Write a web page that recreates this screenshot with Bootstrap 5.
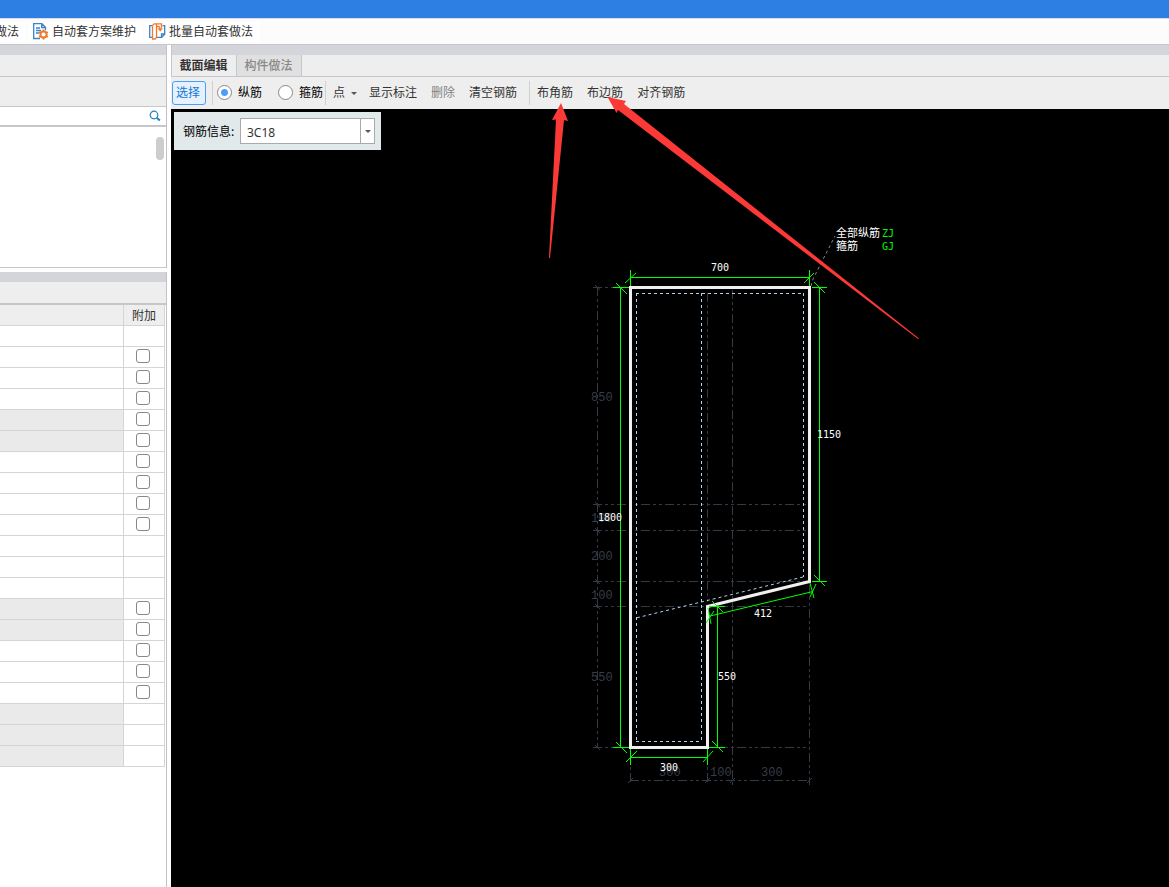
<!DOCTYPE html>
<html lang="zh-CN">
<head>
<meta charset="utf-8">
<meta name="viewport" content="width=device-width, initial-scale=1">
<title>截面编辑</title>
<link rel="stylesheet" href="https://cdn.jsdelivr.net/npm/bootstrap@5.3.0/dist/css/bootstrap.min.css">
<style>
body{font-family:"Noto Sans CJK SC",sans-serif;font-size:12px;line-height:18px;color:#333;background:#fff}
button{color:inherit}
.titlebar{height:18px;background:#2d7fe3}
.ribbon{height:27px;border-top:1px solid #d9dbe0;border-bottom:1px solid #c5c7cc;background:#fcfcfc;margin:0}
.ribbon-item{height:20px;border:0;border-radius:3px;background:#fff;padding:0 7px 0 5px;gap:3px;margin-right:1px;white-space:nowrap}
.ribbon-item span{padding-bottom:2px}
.ribbon-cut{margin-left:-10px;margin-right:2px}
.side{width:167px;margin-right:4px}
.pane{border-right:1px solid #c0c2c6}
.strip{height:10px;background:#d4d5db}
.bar-a{height:22px;background:#eee;border-bottom:1px solid #c5c7cc}
.bar-b{height:30px;background:#eee;border-bottom:1px solid #c5c7cc}
.search{height:20px;border-bottom:2px solid #c5c7cc}
.search input{min-width:0;border:0;outline:0}
.search button{border:0;background:none;width:23px}
.tree{height:141px;border-bottom:1px solid #c5c7cc;padding:10px 2px 0 0}
.thumb{width:8px;height:23px;border-radius:4px;background:#cdcdcd}
.bar-c{height:23px;background:#eee;border-bottom:2px solid #c5c7cc}
.props{width:165px;border-collapse:separate;border-spacing:0;table-layout:fixed}
.props th,.props td{height:21px;padding:0;border-right:1px solid #d5d5d5;border-bottom:1px solid #d5d5d5;font-weight:400;text-align:center;line-height:0}
.props th{background:#eee;line-height:20px}
.props .extra{width:41px}
.props .off td:first-child{background:#eaeaea}
.props input{appearance:none;width:14px;height:14px;margin:0 2px 2px 0;border:1px solid #888;border-radius:3px;background:#fff;vertical-align:middle}
.props input:checked{background:#4a9df8}
.tabs{height:22px;background:#eee;border-bottom:1px solid #c5c7cc;border-left:1px solid #c5c7cc}
.strip-main{border-left:1px solid #c5c7cc}
.tab-btn{width:65px;border:0;border-right:1px solid #c5c7cc;background:#eee;padding:0 1px 1px 0;font-weight:700}
.tab-btn.idle{background:#e0e0e0;color:#888;font-weight:500}
.tools{height:32px;background:#eee;padding-left:1px;white-space:nowrap}
.tools button{border:0;background:none;padding:0 0 2px;height:24px}
.tools .pick{width:34px;height:24px;border:1px solid #4a9df8;border-radius:3px;background:#e5f1fc;color:#1477d8;padding-right:2px}
.rule{width:1px;height:24px;background:#d0d0d0}
.rule-a{margin:0 4px 0 6px}
.rule-b{margin:0 7px 0 2px}
.rule-c{margin:0 7px 0 12px}
.tools input{appearance:none;width:15px;height:15px;margin:0;border:1px solid #888;border-radius:50%;background:#fff}
.tools input:checked{background:radial-gradient(circle,#4a9df8 3px,#fff 4px)}
.tools label{color:#000;gap:6px;padding-bottom:2px}
.gap14{gap:14px}
.drop{gap:6px;margin-right:-2px}
.caret{width:0;height:0;border:3px solid transparent;border-top-color:#555;border-bottom:0}
.drop .caret{margin-top:3px}
.stage{background:#000;min-height:640px}
.stage svg{overflow:visible;pointer-events:none}
.info{left:3px;top:3px;width:207px;height:38px;background:#e1e9eb;color:#000;padding:0 6px 0 9px}
.combo{width:135px;height:26px;border:1px solid #aaa;background:#fff}
.combo input{min-width:0;border:0;outline:0;padding:2px 6px 0;font:12px "Noto Sans",sans-serif;color:#333}
.combo button{width:14px;flex:none;border:0;border-left:1px solid #aaa;background:#fff;padding:0}
.dim{font:10px "DejaVu Sans Mono",monospace;fill:#fff}
.bar-code{fill:#0f0}
.axis-dim{font:12px "Liberation Mono",monospace;fill:#363d48}
.cjk{font:11px "Noto Sans CJK SC",sans-serif;fill:#fff}
</style>
</head>
<body class="d-flex flex-column min-vh-100 overflow-hidden">
<div class="titlebar"></div>
<header class="ribbon d-flex align-items-center">
  <button class="ribbon-item ribbon-cut d-flex align-items-center"><span>做法</span></button>
  <button class="ribbon-item d-flex align-items-center">
    <svg width="16" height="17" viewBox="0 0 16 17" fill="none" aria-hidden="true"><path d="M7 15.500H.7V.7h8.200l3.600 3.600v3M8.700.7v3.800h3.800M3 5h4M3 7.500h5M3 10h3" stroke="#3d83c9" stroke-width="1.300"/><circle cx="10.500" cy="11.500" r="3.100" stroke="#ef7a2b" stroke-width="2"/><path d="M10.500 6.500v2M10.500 14.500v2M6.200 9l1.700 1M13.100 13l1.700 1M6.200 14l1.700-1M13.100 10l1.700-1" stroke="#ef7a2b" stroke-width="2"/></svg>
    <span>自动套方案维护</span>
  </button>
  <button class="ribbon-item d-flex align-items-center">
    <svg width="17" height="17" viewBox="0 0 17 17" fill="none" aria-hidden="true"><path d="M3 2.700H.7v11.600H3M13.500 2.700h2.200v8.600l-3 3H8M12.500 14v-3h3" stroke="#3d83c9" stroke-width="1.300"/><path d="M3.500 2.500 5.200.8h7.300v4M7.500 1v13.500L6 16H3.500V2.500M7.500 3.500h2q1.500 0 1.500 2" stroke="#ef7a2b" stroke-width="1.300"/><path d="M8.500 5.200h5.500L11.200 8.500z" fill="#ef7a2b"/></svg>
    <span>批量自动套做法</span>
  </button>
</header>
<div class="d-flex flex-grow-1">
  <aside class="side d-flex flex-column flex-shrink-0">
    <section class="pane">
      <div class="strip"></div>
      <div class="bar-a"></div>
      <div class="bar-b"></div>
      <div class="search d-flex">
        <input class="flex-grow-1" type="text" aria-label="搜索">
        <button class="d-flex align-items-center justify-content-center p-0" aria-label="查找"><svg width="12" height="12" viewBox="0 0 12 12" fill="none" stroke="#2184b8"><circle cx="5" cy="5" r="3.8" stroke-width="1.2"/><path d="m7.8 7.8 3 2.8" stroke-width="2"/></svg></button>
      </div>
      <div class="tree d-flex justify-content-end"><div class="thumb"></div></div>
    </section>
    <section class="pane flex-grow-1 mt-1">
      <div class="strip"></div>
      <div class="bar-c"></div>
      <table class="props">
        <thead><tr><th></th><th class="extra">附加</th></tr></thead>
        <tbody>
          <tr><td></td><td></td></tr>
          <tr><td></td><td><input type="checkbox" aria-label="附加 2"></td></tr>
          <tr><td></td><td><input type="checkbox" aria-label="附加 3"></td></tr>
          <tr><td></td><td><input type="checkbox" aria-label="附加 4"></td></tr>
          <tr class="off"><td></td><td><input type="checkbox" aria-label="附加 5"></td></tr>
          <tr class="off"><td></td><td><input type="checkbox" aria-label="附加 6"></td></tr>
          <tr><td></td><td><input type="checkbox" aria-label="附加 7"></td></tr>
          <tr><td></td><td><input type="checkbox" aria-label="附加 8"></td></tr>
          <tr><td></td><td><input type="checkbox" aria-label="附加 9"></td></tr>
          <tr><td></td><td><input type="checkbox" aria-label="附加 10"></td></tr>
          <tr><td></td><td></td></tr>
          <tr><td></td><td></td></tr>
          <tr><td></td><td></td></tr>
          <tr class="off"><td></td><td><input type="checkbox" aria-label="附加 14"></td></tr>
          <tr class="off"><td></td><td><input type="checkbox" aria-label="附加 15"></td></tr>
          <tr><td></td><td><input type="checkbox" aria-label="附加 16"></td></tr>
          <tr><td></td><td><input type="checkbox" aria-label="附加 17"></td></tr>
          <tr><td></td><td><input type="checkbox" aria-label="附加 18"></td></tr>
          <tr class="off"><td></td><td></td></tr>
          <tr class="off"><td></td><td></td></tr>
          <tr class="off"><td></td><td></td></tr>
        </tbody>
      </table>
    </section>
  </aside>
  <main class="d-flex flex-column flex-grow-1">
    <div class="strip strip-main"></div>
    <div class="tabs d-flex" role="tablist">
      <button class="tab-btn" role="tab" aria-selected="true">截面编辑</button>
      <button class="tab-btn idle" role="tab" aria-selected="false">构件做法</button>
    </div>
    <div class="tools d-flex align-items-center">
      <button class="pick">选择</button>
      <span class="rule rule-a"></span>
      <label class="d-flex align-items-center me-3"><input type="radio" name="bar" checked>纵筋</label>
      <label class="d-flex align-items-center"><input type="radio" name="bar">箍筋</label>
      <span class="rule rule-b"></span>
      <div class="d-flex align-items-center gap14">
        <button class="drop d-flex align-items-center">点<span class="caret"></span></button>
        <button>显示标注</button>
        <button class="text-black-50" disabled>删除</button>
        <button>清空钢筋</button>
      </div>
      <span class="rule rule-c"></span>
      <div class="d-flex align-items-center gap14">
        <button>布角筋</button>
        <button>布边筋</button>
        <button>对齐钢筋</button>
      </div>
    </div>
    <div class="stage position-relative flex-grow-1">
      <svg class="d-block w-100" viewBox="171 109 998 778" fill="none" aria-label="截面图">
        <g stroke="#343a45" stroke-dasharray="9 3 3 3 3 3">
          <path d="M597.5 287V747M707.5 293V785M732.5 290V785M809.5 585V785M630.5 749V785"/>
          <path d="M593 287.5H630M593 504.5H807M593 530.5H807M593 581.5H807M593 606.5H807M593 747.5H807M630 780.5H810"/>
        </g>
        <path stroke="#343a45" d="m595 285 5 5m-5 212 5 5m-5 21 5 5m-5 46 5 5m-5 20 5 5m-5 136 5 5M628 783l5-5m72 5 5-5m20 5 5-5m72 5 5-5"/>
        <g class="axis-dim">
          <text x="591" y="401">850</text><text x="591" y="522">100</text><text x="591" y="560">200</text><text x="591" y="599">100</text><text x="591" y="681">550</text>
          <text x="659" y="776">300</text><text x="710" y="776">100</text><text x="761" y="776">300</text>
        </g>
        <path stroke="#b4d2f0" stroke-dasharray="3 3" d="M636.5 293V741M701.5 293V741M803.5 293V577M636 293.5H804M636 741.5H702M803 577 636 618"/>
        <path stroke="#888" stroke-dasharray="3 3" d="m811 286 2-7 22-43"/>
        <path stroke="#f0f0f0" stroke-width="3" d="M630.5 287.5h179v294l-102 25v141h-77z"/>
        <g stroke="#0f0">
          <path d="M630 277.5H810M630.5 270v16M809.5 270v16M625 283l11-10M804 283l10-10"/>
          <path d="M620.5 287V748M613 287.5h16M613 747.5h16M616 283l11 11M616 742l11 11"/>
          <path d="M819.5 287V582M812 287.5h15M812 581.5h15M814 282l11 11M814 575l11 11"/>
          <path d="M717.5 606V748M709 606.5h16M709 747.5h16M712 601l11 11M712 741l11 11"/>
          <path d="M630 757.5H708M630.5 749v16M707.5 749v16M626 762l11-11M703 762l10-11"/>
          <path d="M710 616 813 591.5M708 608l3 16M706 623l8-12M810 583l4 15M810 597l6-13"/>
        </g>
        <g class="dim">
          <text x="711" y="271">700</text><text x="598" y="521">1800</text><text x="817" y="438">1150</text><text x="754" y="617">412</text><text x="718" y="680">550</text><text x="660" y="771">300</text>
          <text class="bar-code" x="882" y="237">ZJ</text><text class="bar-code" x="882" y="250">GJ</text>
        </g>
        <g class="cjk"><text x="836" y="237">全部纵筋</text><text x="836" y="250">箍筋</text></g>
        <g fill="#fb3a37">
          <path d="M561 103 568 121 564 120 550 258H549L556 119.500 552 120z"/>
          <path d="M607.500 97 626 101 624 104 919 338.500 918 339 618 110 616.500 113z"/>
        </g>
      </svg>
      <div class="info position-absolute d-flex align-items-center justify-content-between">
        <label for="rebar">钢筋信息:</label>
        <div class="combo d-flex">
          <input id="rebar" class="flex-grow-1" type="text" value="3C18">
          <button class="d-flex align-items-center justify-content-center" aria-label="展开"><span class="caret"></span></button>
        </div>
      </div>
    </div>
  </main>
</div>
<script src="https://cdn.jsdelivr.net/npm/bootstrap@5.3.0/dist/js/bootstrap.bundle.min.js"></script>
</body>
</html>
